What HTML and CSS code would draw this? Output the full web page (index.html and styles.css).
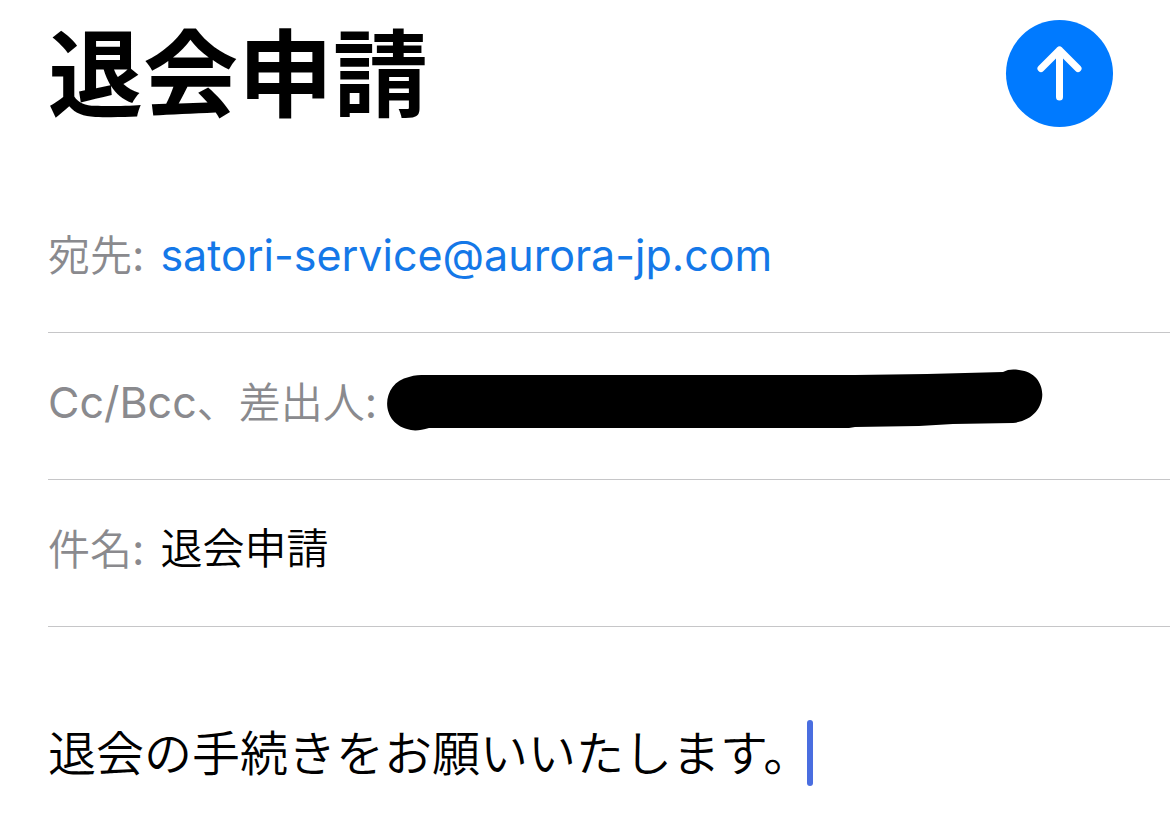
FILE: index.html
```html
<!DOCTYPE html>
<html lang="ja">
<head>
  <meta charset="UTF-8">
  <meta name="viewport" content="width=device-width, initial-scale=1.0">
  <title>退会申請</title>
  <link rel="stylesheet" href="styles.css">
</head>
<body>
  <form class="compose">
    <header class="header">
      <h1>退会申請</h1>
      <button type="button" class="send" aria-label="送信">
        <svg viewBox="0 0 107 107" aria-hidden="true">
          <path d="M53.500 77V30M35 48.500L53.500 30L72 48.500"/>
        </svg>
      </button>
    </header>

    <div class="row">
      <span class="label">宛先<span class="latin">:</span></span>
      <a class="address" href="mailto:satori-service@aurora-jp.com">satori-service@aurora-jp.com</a>
    </div>

    <div class="row">
      <span class="label"><span class="latin">Cc/Bcc</span>、差出人<span class="latin">:</span></span>
      <svg class="redacted" viewBox="0 0 656 62" aria-hidden="true">
        <path d="M22 6C28 4 33 4 38 4H468L540 3L616 1C621-2 627-2 632-1C664 2 664 48 626 52L566 53L532 55L468 56L462 57H42C35 59 29 60 24 59C-8 54-7 12 22 6Z"/>
      </svg>
    </div>

    <div class="row">
      <label class="label" for="subject">件名<span class="latin">:</span></label>
      <input class="subject" id="subject" type="text" value="退会申請">
    </div>

    <div class="message" contenteditable="true" role="textbox" aria-label="本文">退会の手続きをお願いいたします。<span class="caret"></span></div>
  </form>
</body>
</html>
```

FILE: styles.css
```css
* {
  box-sizing: border-box;
}

body {
  margin: 0;
  background: #fff;
  color: #000;
  font-family: Inter, 'Noto Sans CJK JP', sans-serif;
  font-size: 42px;
  line-height: 60px;
}

.compose {
  padding: 20px 0 0 48px;
}

.header {
  display: flex;
  justify-content: space-between;
  align-items: flex-start;
  height: 166px;
  padding-right: 57px;
}

h1 {
  margin: 0;
  font-size: 95px;
  line-height: 112px;
  font-weight: 700;
}

.send {
  width: 107px;
  height: 107px;
  padding: 0;
  border: none;
  border-radius: 50%;
  background: #007aff;
  cursor: pointer;
}

.send svg {
  display: block;
  fill: none;
  stroke: #fff;
  stroke-width: 7;
  stroke-linecap: round;
  stroke-linejoin: round;
}

.row {
  display: flex;
  align-items: center;
  height: 147px;
  padding-bottom: 8px;
  border-bottom: 1px solid #c6c6c8;
}

.label {
  flex: none;
  color: #8a8a8e;
  font-weight: 350;
}

.latin {
  font-size: 43px;
  font-weight: 400;
}

.address {
  margin-left: 16px;
  color: #1478e8;
  font-size: 43px;
  text-decoration: none;
}

.redacted {
  flex: none;
  width: 656px;
  height: 62px;
  margin-left: 10px;
  overflow: visible;
}

.subject {
  flex: 1;
  min-width: 0;
  height: 60px;
  margin-left: 16px;
  padding: 0;
  border: none;
  outline: none;
  background: none;
  font: inherit;
  font-weight: 350;
}

.message {
  display: flex;
  align-items: flex-start;
  padding-top: 93px;
  outline: none;
  font-size: 48px;
  font-weight: 350;
  line-height: 68px;
}

/* sits in the empty half of the closing full stop */
.caret {
  width: 6px;
  height: 66px;
  margin-left: -4px;
  border-radius: 3px;
  background: #4a6ee0;
}
```
